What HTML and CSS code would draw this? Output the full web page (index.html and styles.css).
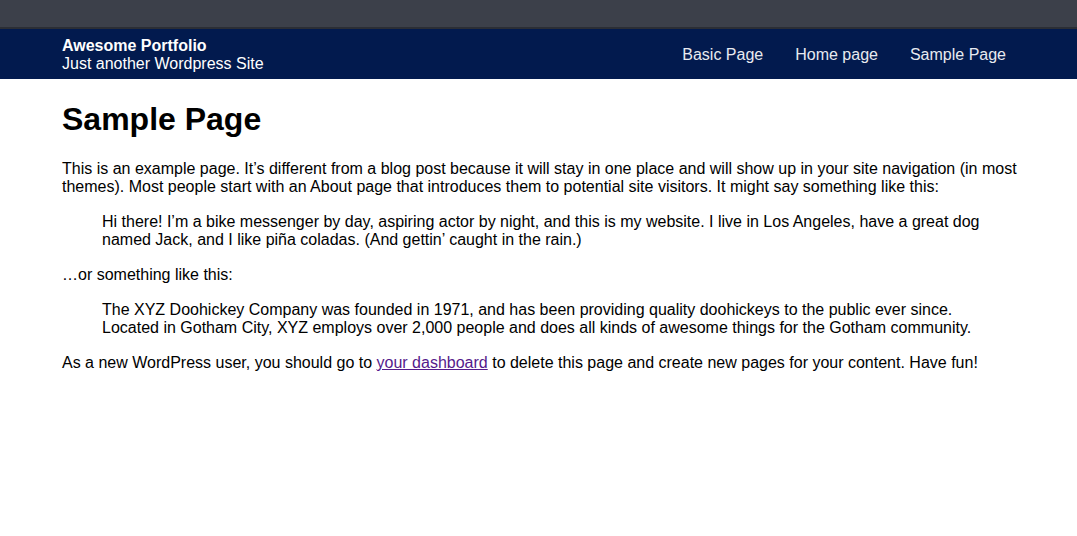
FILE: index.html
```html
<!DOCTYPE html>
<html lang="en">
<head>
<meta charset="utf-8">
<title>Sample Page – Awesome Portfolio</title>
<link rel="stylesheet" href="styles.css">
</head>
<body>
<div class="topbar"></div>
<header class="site-header">
  <div class="container header-inner">
    <div class="branding">
      <div class="site-title">Awesome Portfolio</div>
      <div class="site-desc">Just another Wordpress Site</div>
    </div>
    <nav class="site-nav">
      <a href="#">Basic Page</a>
      <a href="#">Home page</a>
      <a href="#">Sample Page</a>
    </nav>
  </div>
</header>
<main class="container content">
  <h1 class="page-title">Sample Page</h1>
  <p>This is an example page. It’s different from a blog post because it will stay in one place and will show up in your site navigation (in most themes). Most people start with an About page that introduces them to potential site visitors. It might say something like this:</p>
  <blockquote class="quote-tight"><p>Hi there! I’m a bike messenger by day, aspiring actor by night, and this is my website. I live in Los Angeles, have a great dog named Jack, and I like piña coladas. (And gettin’ caught in the rain.)</p></blockquote>
  <p>…or something like this:</p>
  <blockquote><p>The XYZ Doohickey Company was founded in 1971, and has been providing quality doohickeys to the public ever since. Located in Gotham City, XYZ employs over 2,000 people and does all kinds of awesome things for the Gotham community.</p></blockquote>
  <p>As a new WordPress user, you should go to <a class="visited" href="#">your dashboard</a> to delete this page and create new pages for your content. Have fun!</p>
</main>
</body>
</html>
```
FILE: styles.css
```css
html, body {
  margin: 0;
  padding: 0;
  background: #ffffff;
}
body {
  font-family: "Liberation Sans", Arial, sans-serif;
  font-size: 16px;
  color: #000;
}
.topbar {
  height: 23px;
  background: #3c404a;
  border-bottom: 2px solid #2b2e35;
  padding-bottom: 4px;
}
.container {
  margin: 0 50px 0 62px;
}
.site-header {
  background: #021a4e;
  color: #fff;
}
.header-inner {
  display: flex;
  align-items: center;
  justify-content: space-between;
  padding: 8px 0 6px;
}
.site-title {
  font-weight: bold;
  line-height: 18px;
}
.site-desc {
  line-height: 18px;
}
.site-nav {
  display: flex;
  gap: 32px;
  margin-right: 21px;
}
.site-nav a {
  color: #e8eaf0;
  text-decoration: none;
}
.content {
  padding-bottom: 20px;
}
.page-title {
  font-size: 32px;
  margin: 22px 0 22px;
}
.content p {
  margin: 16px 0 17px;
}
blockquote {
  margin: 17px 40px;
}
blockquote.quote-tight {
  margin-bottom: 16px;
}
blockquote p {
  margin: 0;
}
a.visited {
  color: #551a8b;
}
```
